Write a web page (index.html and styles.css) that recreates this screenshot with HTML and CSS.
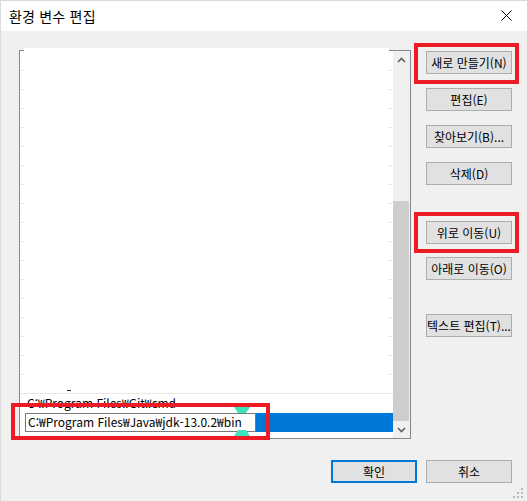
FILE: index.html
```html
<!DOCTYPE html>
<html lang="ko">
<head>
<meta charset="utf-8">
<title>환경 변수 편집</title>
<link rel="stylesheet" href="styles.css">
</head>
<body>
<div class="window">
  <header class="titlebar">
    <span class="title">환경 변수 편집</span>
    <svg class="close" width="11" height="11" viewBox="0 0 11 11"><path d="M0.5 0.5 L10.5 10.5 M10.5 0.5 L0.5 10.5" stroke="#000" stroke-width="1" fill="none"/></svg>
  </header>
  <main class="content">
    <div class="list">
      <div class="list-inner">
        <div class="rows-empty"><span class="dash"></span></div>
        <div class="row git">C:₩Program Files₩Git₩cmd</div>
        <div class="row selected">
          <div class="editbox">C:₩Program Files₩Java₩jdk-13.0.2₩bin</div>
          <div class="sel-fill"></div>
        </div>
      </div>
      <div class="scrollbar">
        <div class="sb-btn"><svg width="9" height="6" viewBox="0 0 9 6"><path d="M1 5 L4.5 1.5 L8 5" stroke="#606060" stroke-width="1.6" fill="none"/></svg></div>
        <div class="sb-track"><div class="sb-thumb"></div></div>
        <div class="sb-btn"><svg width="9" height="6" viewBox="0 0 9 6"><path d="M1 1 L4.5 4.5 L8 1" stroke="#606060" stroke-width="1.6" fill="none"/></svg></div>
      </div>
    </div>
    <div class="side">
      <button class="btn">새로 만들기(N)</button>
      <button class="btn">편집(E)</button>
      <button class="btn">찾아보기(B)...</button>
      <button class="btn">삭제(D)</button>
      <button class="btn sep-top">위로 이동(U)</button>
      <button class="btn sep-mid">아래로 이동(O)</button>
      <button class="btn sep-bot">텍스트 편집(T)...</button>
    </div>
  </main>
  <footer class="footer">
    <button class="btn primary">확인</button>
    <button class="btn">취소</button>
  </footer>
  <svg class="grip" width="10" height="10" viewBox="0 0 10 10">
    <rect x="8" y="0" width="2" height="2" fill="#b8b8b8"/>
    <rect x="4" y="4" width="2" height="2" fill="#b8b8b8"/>
    <rect x="8" y="4" width="2" height="2" fill="#b8b8b8"/>
    <rect x="0" y="8" width="2" height="2" fill="#b8b8b8"/>
    <rect x="4" y="8" width="2" height="2" fill="#b8b8b8"/>
    <rect x="8" y="8" width="2" height="2" fill="#b8b8b8"/>
  </svg>

  <svg class="mark mark-top" width="16" height="6" viewBox="0 0 16 6"><path d="M0 0 H16 L12 6 H4 Z" fill="#3fe3bb"/></svg>
  <svg class="mark mark-bottom" width="16" height="6" viewBox="0 0 16 6"><path d="M4 0 H12 L16 6 H0 Z" fill="#3fe3bb"/></svg>

  <div class="redbox rb-new"></div>
  <div class="redbox rb-up"></div>
  <div class="redbox rb-path"></div>
</div>
</body>
</html>
```
FILE: styles.css
```css
html, body {
  margin: 0;
  padding: 0;
}
body {
  width: 527px;
  height: 501px;
  overflow: hidden;
  background: #f0f0f0;
  font-family: "Noto Sans CJK KR", "Noto Sans", sans-serif;
  font-size: 12px;
  color: #000;
}
.window {
  position: relative;
  width: 527px;
  height: 501px;
  background: #f0f0f0;
  box-shadow: inset 1px 0 #dcdcdc, inset 0 1px #d9d9d9;
}
.titlebar {
  height: 31px;
  background: #fff;
  display: flex;
  align-items: center;
  justify-content: space-between;
  padding: 0 15px 0 9px;
  box-sizing: border-box;
  box-shadow: inset 1px 0 #dcdcdc, inset 0 1px #d9d9d9;
}
.title {
  font-size: 14px;
  line-height: 18px;
  letter-spacing: 0.2px;
  padding-top: 1px;
}
.close {
  display: block;
  margin-top: -1px;
}
.content {
  display: flex;
  padding: 19px 0 0 19px;
}
.list {
  position: relative;
  width: 392px;
  height: 389px;
  box-sizing: border-box;
  border: 1px solid #828790;
  display: flex;
  background: #fff;
}
.list::before {
  content: "";
  position: absolute;
  left: 4px;
  right: 21px;
  top: -3px;
  height: 3px;
  background: #fff;
}
.list-inner {
  width: 373px;
  display: flex;
  flex-direction: column;
  background: #fff;
}
.rows-empty {
  height: 342px;
  box-sizing: border-box;
  padding-top: 19px;
  display: flex;
  flex-direction: column;
  justify-content: flex-end;
  background-image:
    linear-gradient(to bottom, #e3e3e3 1px, transparent 1px),
    linear-gradient(to bottom, #e3e3e3 1px, transparent 1px);
  background-size: 3px 19px, 3px 19px;
  background-repeat: repeat-y;
  background-position: left 1px top 0, right 1px top 0;
  background-origin: content-box;
  background-clip: content-box;
}
.dash {
  display: block;
  width: 4px;
  height: 1px;
  background: #333;
  margin: 0 0 2px 47px;
}
.row {
  height: 19px;
  box-sizing: border-box;
  line-height: 19px;
  white-space: nowrap;
}
.git {
  border-top: 1px solid #e6e6e6;
  height: 20px;
  padding-left: 7px;
  line-height: 18px;
}
.selected {
  display: flex;
  padding-left: 5px;
}
.editbox {
  width: 231px;
  height: 19px;
  box-sizing: border-box;
  border: 1px solid #7a7a7a;
  background: #fff;
  padding-left: 2px;
  line-height: 16px;
  white-space: nowrap;
  overflow: hidden;
}
.sel-fill {
  flex: 1;
  background: #0078d7;
}
.scrollbar {
  width: 17px;
  background: #f0f0f0;
  display: flex;
  flex-direction: column;
}
.sb-btn {
  height: 17px;
  display: flex;
  align-items: center;
  justify-content: center;
}
.sb-track {
  flex: 1;
  display: flex;
  flex-direction: column;
  justify-content: flex-end;
}
.sb-thumb {
  height: 220px;
  width: 16px;
  background: #cdcdcd;
}
.side {
  display: flex;
  flex-direction: column;
  gap: 14px;
  margin-left: 15px;
  padding-top: 1px;
}
.btn {
  width: 86px;
  height: 23px;
  box-sizing: border-box;
  background: #e1e1e1;
  border: 1px solid #adadad;
  font-family: "Noto Sans CJK KR", "Noto Sans", sans-serif;
  font-size: 12px;
  line-height: 19px;
  color: #000;
  padding: 0;
  margin: 0;
  white-space: nowrap;
  text-align: center;
}
.sep-top { margin-top: 22px; }
.sep-mid { margin-top: -1px; }
.sep-bot { margin-top: 20px; }
.footer {
  display: flex;
  justify-content: flex-end;
  gap: 9px;
  padding: 21px 15px 0 0;
}
.primary {
  border: 2px solid #0078d7;
}
.grip {
  position: absolute;
  right: 4px;
  bottom: 3px;
}
.mark {
  position: absolute;
}
.mark-top { left: 234px; top: 407px; }
.mark-bottom { left: 234px; top: 430px; }
.redbox {
  position: absolute;
  box-sizing: border-box;
  border: 4px solid #ed1c24;
}
.rb-new { left: 414px; top: 43px; width: 105px; height: 41px; }
.rb-up { left: 414px; top: 212px; width: 105px; height: 41px; }
.rb-path { left: 11px; top: 403px; width: 259px; height: 37px; }
```
